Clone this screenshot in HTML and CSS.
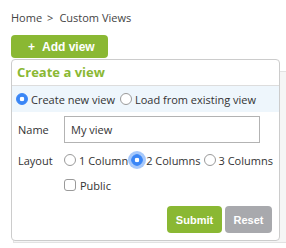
FILE: index.html
```html
<!DOCTYPE html>
<html lang="en">
<head>
    <meta charset="UTF-8">
    <meta name="viewport" content="width=device-width, initial-scale=1.0">
    <title>Custom Views</title>
    <link rel="stylesheet" href="styles.css">
</head>
<body>
    <!-- Breadcrumb -->
    <div class="breadcrumb">
        <span>Home</span><span class="sep">&gt;</span><span>Custom Views</span>
    </div>

    <!-- Toolbar with dropdown -->
    <div class="toolbar">
        <button class="btn-add" type="button"><span class="plus">+</span>Add view</button>

        <div class="dropdown">
            <div class="dropdown-title">Create a view</div>
            <div class="source-row">
                <label class="radio"><input type="radio" name="source" checked>Create new view</label>
                <label class="radio"><input type="radio" name="source">Load from existing view</label>
            </div>
            <form class="view-form" onsubmit="event.preventDefault();">
                <div class="field name-field">
                    <label class="field-label" for="viewName">Name</label>
                    <input type="text" id="viewName" class="text-input" value="My view">
                </div>
                <div class="field layout-field">
                    <span class="field-label">Layout</span>
                    <label class="radio tight"><input type="radio" name="layout">1 Column</label>
                    <label class="radio tight"><input type="radio" name="layout" class="focused" checked>2 Columns</label>
                    <label class="radio tight"><input type="radio" name="layout">3 Columns</label>
                </div>
                <div class="field public-field">
                    <span class="field-label"></span>
                    <label class="check"><input type="checkbox">Public</label>
                </div>
                <div class="actions">
                    <button type="submit" class="btn-submit">Submit</button>
                    <button type="reset" class="btn-reset">Reset</button>
                </div>
            </form>
        </div>
    </div>

    <!-- Page content behind the dropdown -->
    <div class="content"></div>
</body>
</html>
```

FILE: styles.css
```css
body {
    margin: 0;
    font-family: "Open Sans", sans-serif;
    font-size: 11px;
    color: #333;
    background-color: #fff;
    overflow: hidden;
}
.breadcrumb {
    padding: 10px 11px 0;
    height: 16px;
    line-height: 16px;
    color: #444;
}
.breadcrumb .sep {
    margin: 0 6px 0 5px;
}
.toolbar {
    position: relative;
    margin: 9px 0 0 11px;
    height: 23px;
}
.btn-add {
    display: flex;
    align-items: center;
    width: 97px;
    height: 23px;
    padding: 0 0 0 17px;
    border: none;
    border-radius: 4px;
    background-color: #8ab833;
    color: #fff;
    font-family: "Liberation Sans", Arial, sans-serif;
    font-size: 12px;
    font-weight: bold;
}
.btn-add .plus {
    margin-right: 7px;
}
.dropdown {
    position: absolute;
    top: 24px;
    left: 0;
    width: 269px;
    height: 182px;
    box-sizing: border-box;
    border: 1px solid #ccc;
    border-radius: 4px;
    background-color: #fff;
    z-index: 2;
}
.dropdown-title {
    height: 25px;
    line-height: 25px;
    padding-left: 5px;
    border-bottom: 1px solid #ddd;
    color: #8ab833;
    font-size: 13px;
    font-weight: bold;
}
.source-row {
    display: flex;
    align-items: center;
    height: 26px;
    padding-left: 4px;
    background-color: #eef6fc;
}
.radio, .check {
    display: flex;
    align-items: center;
    flex-shrink: 0;
    white-space: nowrap;
    margin-right: 5px;
}
.radio.tight {
    margin-right: 3px;
}
.radio input, .check input {
    appearance: none;
    width: 12px;
    height: 12px;
    margin: 0 3px 0 0;
    border: 1px solid #9a9a9a;
    background-color: #fff;
    box-sizing: border-box;
}
.radio input {
    border-radius: 50%;
}
.check input {
    border-radius: 3px;
    margin-right: 4px;
}
.radio input:checked {
    border-color: #3a86f6;
    background: radial-gradient(circle, #fff 0 2px, #3a86f6 2.6px);
}
.radio input.focused {
    box-shadow: 0 0 0 3px rgba(58, 134, 246, 0.45);
}
.view-form {
    padding: 4px 7px 0 6px;
}
.field {
    display: flex;
    align-items: center;
}
.field-label {
    width: 46px;
    flex-shrink: 0;
}
.name-field {
    margin-bottom: 8px;
}
.text-input {
    width: 196px;
    height: 27px;
    box-sizing: border-box;
    padding: 0 6px;
    border: 1px solid #b3b3b3;
    font-family: "Open Sans", sans-serif;
    font-size: 11px;
    color: #333;
}
.layout-field {
    height: 18px;
    margin-bottom: 7px;
}
.public-field {
    height: 18px;
}
.actions {
    display: flex;
    justify-content: flex-end;
    gap: 3px;
    margin-top: 12px;
}
.actions button {
    height: 27px;
    border: none;
    border-radius: 4px;
    color: #fff;
    font-family: "Liberation Sans", Arial, sans-serif;
    font-size: 11px;
    font-weight: bold;
}
.btn-submit {
    width: 55px;
    background-color: #8ab833;
}
.btn-reset {
    width: 47px;
    background-color: #a8a9ad;
}
.content {
    margin: 13px 0 0 13px;
    height: 170px;
    border: 1px solid #e2e2e2;
    border-right: none;
    background-color: #f5f5f5;
}
```
